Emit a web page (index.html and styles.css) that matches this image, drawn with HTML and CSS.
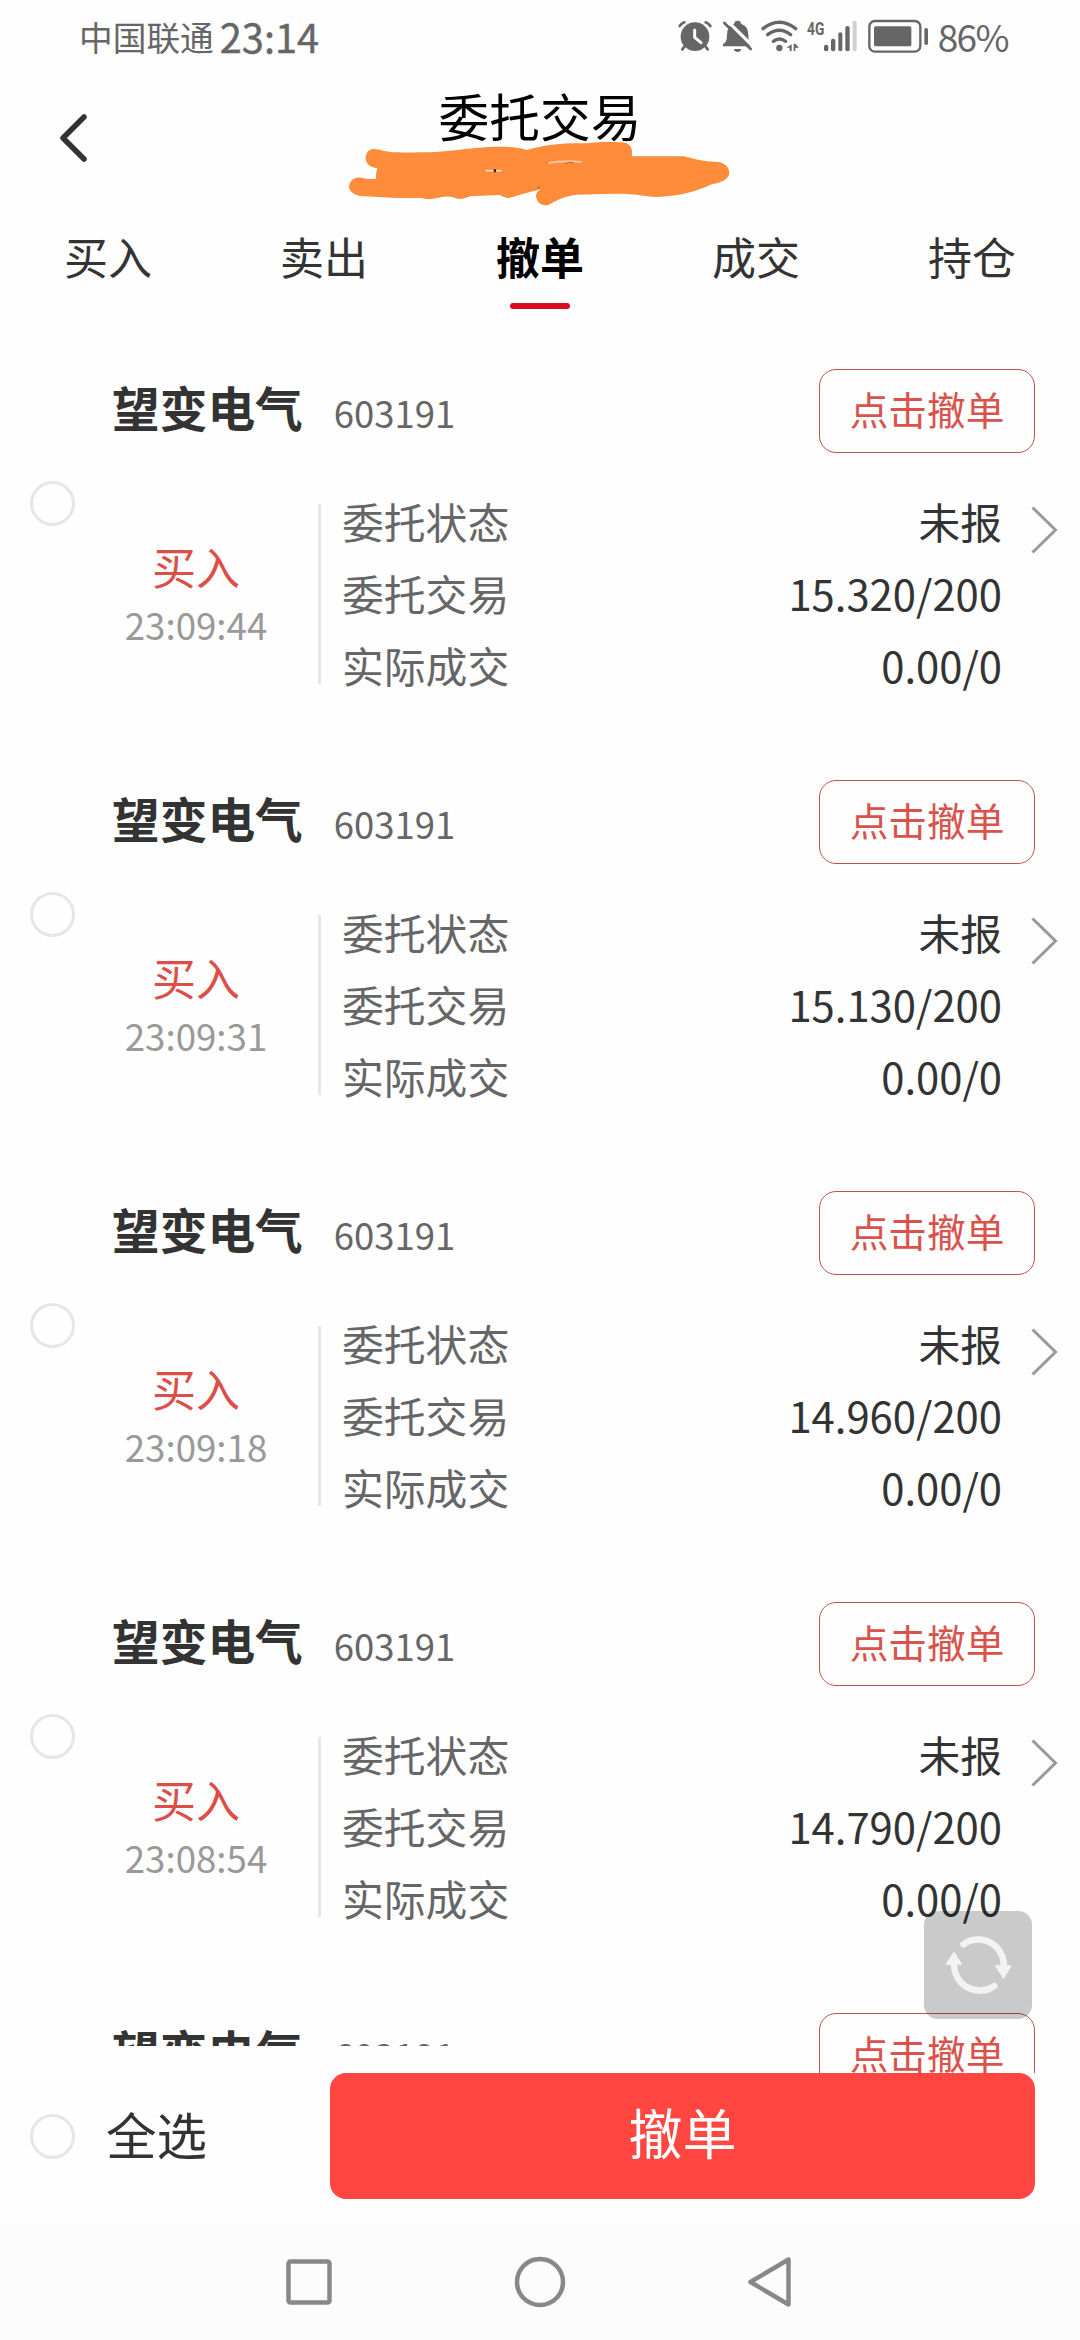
FILE: index.html
```html
<!DOCTYPE html>
<html lang="zh-CN">
<head>
<meta charset="utf-8">
<title>委托交易</title>
<link rel="stylesheet" href="styles.css">
</head>
<body>
<div class="screen">
  <div class="status">
    <span class="carrier">中国联通</span>
    <span class="clock">23:14</span>
    <div class="indicators">
      <svg class="ico-alarm" viewBox="57 54 105 108" width="35" height="36">
        <g fill="none" stroke="#666" stroke-linecap="round">
          <path d="M62 78Q67 70 76 67M154 78Q149 70 140 67" stroke-width="8"/>
          <path d="M76 140L70 148M140 140L146 148" stroke-width="8"/>
        </g>
        <circle cx="108" cy="110" r="43" fill="#666"/>
        <path d="M107 90V112L126 128" fill="none" stroke="#fefefe" stroke-width="9" stroke-linecap="round" stroke-linejoin="round"/>
      </svg>
      <svg class="ico-bell" viewBox="188 54 93 108" width="31" height="36">
        <path d="M191 139V132Q203 128 203 106Q203 76 224 72Q226 62 235 62Q244 62 246 72Q267 78 267 106Q267 128 277 134V139Z" fill="#666"/>
        <path d="M223 147H246Q244 156 235 156Q226 156 223 147Z" fill="#666"/>
        <path d="M203 62L284 142" stroke="#fefefe" stroke-width="10"/>
        <path d="M195 69L274 147" stroke="#666" stroke-width="8" stroke-linecap="round"/>
      </svg>
      <svg class="ico-wifi" viewBox="305 54 117 108" width="39" height="36">
        <g fill="none" stroke="#666" stroke-width="10" stroke-linecap="round">
          <path d="M311 86Q360 48 409 86"/>
          <path d="M325 104Q360 78 394 104"/>
          <path d="M342 124Q360 110 379 124"/>
        </g>
        <circle cx="360" cy="144" r="9.5" fill="#666"/>
        <path d="M381 143L397 133V153H391V143ZM403 131H408L419 143H408V153H403Z" fill="#666"/>
      </svg>
      <svg class="ico-signal" viewBox="443 54 150 108" width="50" height="36">
        <text x="443" y="104" class="net" textLength="52" lengthAdjust="spacingAndGlyphs">4G</text>
        <g fill="#666">
          <rect x="494" y="134" width="13" height="20" rx="6"/>
          <rect x="515" y="116" width="13" height="38" rx="6"/>
          <rect x="537" y="97" width="12" height="57" rx="6"/>
          <rect x="558" y="78" width="13" height="76" rx="6"/>
          <rect x="580" y="62" width="12" height="92" rx="6" fill="#d0d0d0"/>
        </g>
      </svg>
      <svg class="ico-battery" viewBox="627 54 183 108" width="61" height="36">
        <rect x="631" y="63" width="153" height="92" rx="17" fill="none" stroke="#666" stroke-width="7"/>
        <rect x="645" y="79" width="112" height="60" rx="5" fill="#666"/>
        <rect x="796" y="84" width="11" height="51" rx="5" fill="#666"/>
      </svg>
      <span class="percent">86%</span>
    </div>
  </div>

  <header class="titlebar">
    <svg class="back" viewBox="0 0 32 52" width="32" height="52"><path d="M26 5L5 26L26 47" fill="none" stroke="#333" stroke-width="5.5" stroke-linecap="round" stroke-linejoin="round"/></svg>
    <h1 class="title">委托交易</h1>
    <svg class="scribble" viewBox="45 180 1170 210" width="390" height="70">
      <path fill="#ff8c3a" d="M130 207C150 207 165 217 200 217C300 219 350 215 400 208C450 203 540 193 590 210C640 195 700 187 770 190C820 184 880 186 890 190C905 197 908 212 905 229L1060 229C1100 238 1130 247 1160 245C1185 247 1198 262 1198 280C1196 298 1175 308 1145 313C1100 335 1040 350 980 351C940 348 910 340 850 341L740 344C700 350 680 360 655 375C635 380 617 365 618 345Q622 333 632 328C600 335 570 345 545 352Q528 358 510 345L420 349C405 355 390 362 370 352C350 345 320 355 300 358Q285 358 275 354L200 354C160 352 130 350 90 348C65 342 57 330 57 318C60 300 75 290 95 293C110 298 125 297 138 296C138 285 138 275 142 265C120 262 106 250 107 233C108 218 117 208 130 207Z"/>
      <path d="M467 272H515" stroke="#ffe0c4" stroke-width="5"/>
      <path d="M491 272H498" stroke="#3a1c08" stroke-width="9"/>
      <path d="M655 249Q700 240 755 246" fill="none" stroke="#ffc59a" stroke-width="6"/>
      <path d="M706 251Q718 243 732 249M649 248H653M622 323H630" fill="none" stroke="#b4622a" stroke-width="3"/>
    </svg>
  </header>

  <nav class="tabs">
    <span class="tab">买入</span>
    <span class="tab">卖出</span>
    <span class="tab active">撤单</span>
    <span class="tab">成交</span>
    <span class="tab">持仓</span>
  </nav>

  <main class="list">
    <section class="order">
      <i class="check"></i>
      <div class="main">
        <div class="head"><div class="stock"><b class="name">望变电气</b><span class="code">603191</span></div><span class="cancel">点击撤单</span></div>
        <div class="body">
          <div class="side"><span class="buy">买入</span><span class="time">23:09:44</span></div>
          <div class="details">
            <div class="line"><span class="label">委托状态</span><span>未报</span></div>
            <div class="line"><span class="label">委托交易</span><span>15.320/200</span></div>
            <div class="line"><span class="label">实际成交</span><span>0.00/0</span></div>
          </div>
          <svg class="chevron" viewBox="0 0 30 50" width="30" height="50"><path d="M2.500 2.500L25.500 25L2.500 47.500" fill="none" stroke="#999" stroke-width="3"/></svg>
        </div>
      </div>
    </section>
    <section class="order">
      <i class="check"></i>
      <div class="main">
        <div class="head"><div class="stock"><b class="name">望变电气</b><span class="code">603191</span></div><span class="cancel">点击撤单</span></div>
        <div class="body">
          <div class="side"><span class="buy">买入</span><span class="time">23:09:31</span></div>
          <div class="details">
            <div class="line"><span class="label">委托状态</span><span>未报</span></div>
            <div class="line"><span class="label">委托交易</span><span>15.130/200</span></div>
            <div class="line"><span class="label">实际成交</span><span>0.00/0</span></div>
          </div>
          <svg class="chevron" viewBox="0 0 30 50" width="30" height="50"><path d="M2.500 2.500L25.500 25L2.500 47.500" fill="none" stroke="#999" stroke-width="3"/></svg>
        </div>
      </div>
    </section>
    <section class="order">
      <i class="check"></i>
      <div class="main">
        <div class="head"><div class="stock"><b class="name">望变电气</b><span class="code">603191</span></div><span class="cancel">点击撤单</span></div>
        <div class="body">
          <div class="side"><span class="buy">买入</span><span class="time">23:09:18</span></div>
          <div class="details">
            <div class="line"><span class="label">委托状态</span><span>未报</span></div>
            <div class="line"><span class="label">委托交易</span><span>14.960/200</span></div>
            <div class="line"><span class="label">实际成交</span><span>0.00/0</span></div>
          </div>
          <svg class="chevron" viewBox="0 0 30 50" width="30" height="50"><path d="M2.500 2.500L25.500 25L2.500 47.500" fill="none" stroke="#999" stroke-width="3"/></svg>
        </div>
      </div>
    </section>
    <section class="order">
      <i class="check"></i>
      <div class="main">
        <div class="head"><div class="stock"><b class="name">望变电气</b><span class="code">603191</span></div><span class="cancel">点击撤单</span></div>
        <div class="body">
          <div class="side"><span class="buy">买入</span><span class="time">23:08:54</span></div>
          <div class="details">
            <div class="line"><span class="label">委托状态</span><span>未报</span></div>
            <div class="line"><span class="label">委托交易</span><span>14.790/200</span></div>
            <div class="line"><span class="label">实际成交</span><span>0.00/0</span></div>
          </div>
          <svg class="chevron" viewBox="0 0 30 50" width="30" height="50"><path d="M2.500 2.500L25.500 25L2.500 47.500" fill="none" stroke="#999" stroke-width="3"/></svg>
        </div>
      </div>
    </section>
    <section class="order partial">
      <div class="main">
        <div class="head"><div class="stock"><b class="name">望变电气</b><span class="code">603191</span></div><span class="cancel">点击撤单</span></div>
      </div>
    </section>
    <div class="refresh">
      <svg viewBox="0 0 108 108" width="108" height="108">
        <g fill="none" stroke="#f3f3f3" stroke-width="6.500" stroke-linecap="round">
          <path d="M39.500 33.300A25.500 25.500 0 0 1 79.700 56"/>
          <path d="M70.300 75A25.500 25.500 0 0 1 30.300 52"/>
        </g>
        <path d="M70.500 54.300H87.900L79.500 68.300ZM21.200 53.700H38.500L30 40.300Z" fill="#f3f3f3"/>
      </svg>
    </div>
  </main>

  <footer class="footer">
    <i class="check"></i>
    <span class="all">全选</span>
    <span class="submit">撤单</span>
  </footer>

  <div class="sysnav">
    <svg viewBox="0 0 50 54" width="50" height="54"><rect x="4.500" y="6.500" width="41" height="41" rx="2" fill="none" stroke="#888" stroke-width="4.500"/></svg>
    <svg viewBox="0 0 54 54" width="54" height="54"><circle cx="27" cy="27" r="23" fill="none" stroke="#888" stroke-width="4.500"/></svg>
    <svg viewBox="0 0 48 54" width="48" height="54"><path d="M42.500 4.500V49.500L4.500 27Z" fill="none" stroke="#888" stroke-width="4.500" stroke-linejoin="round"/></svg>
  </div>
</div>
</body>
</html>
```

FILE: styles.css
```css
* { box-sizing: border-box; }
body {
  margin: 0;
  background: #fefefe;
  color: #333;
  font-family: "Noto Sans CJK SC", sans-serif;
}
.screen {
  width: 1080px;
  height: 2340px;
  display: flex;
  flex-direction: column;
  overflow: hidden;
  white-space: nowrap;
}

/* System status bar */
.status {
  height: 80px;
  padding: 0 72px 8px 79px;
  display: flex;
  align-items: center;
  color: #666;
}
.carrier { font-size: 33.7px; line-height: 73px; }
.clock { font-size: 39.8px; line-height: 72px; margin-left: 6px; -webkit-text-stroke: 0.4px #666; }
.indicators { margin-left: auto; display: flex; align-items: center; }
.ico-bell { margin-left: 9px; }
.ico-wifi { margin-left: 8px; }
.ico-signal { margin-left: 7px; }
.ico-battery { margin-left: 11px; }
.net { font: bold 54px "Roboto", sans-serif; fill: #666; }
.percent { font-size: 37px; line-height: 68px; margin-left: 9px; letter-spacing: -1.6px; }

/* Title */
.titlebar {
  position: relative;
  height: 140px;
  display: flex;
  justify-content: center;
}
.back { position: absolute; left: 58px; top: 32px; }
.title { margin: 0; font-size: 50.7px; line-height: 71px; font-weight: 400; color: #000; }
.scribble { position: absolute; left: 345px; top: 60px; }

/* Tabs */
.tabs { height: 113px; display: grid; grid-template-columns: repeat(5, 1fr); }
.tab {
  display: flex;
  flex-direction: column;
  align-items: center;
  font-size: 44px;
  line-height: 73px;
}
.active { color: #000; font-weight: 700; }
.active::after {
  content: "";
  width: 60px;
  height: 6px;
  margin-top: 10px;
  border-radius: 3px;
  background: #dc0b20;
}

/* Orders */
.list { position: relative; height: 1740px; overflow: hidden; }
.order { height: 411px; padding-left: 30px; display: flex; }
.check {
  width: 45px;
  height: 45px;
  border: 3px solid #e6e6e6;
  border-radius: 50%;
  flex: none;
}
.order .check { margin-top: 148px; }
.main { flex: 1; padding: 36px 0 0 37px; }
.head { height: 84px; padding-right: 45px; display: flex; justify-content: space-between; }
.stock { display: flex; align-items: center; }
.name { font-size: 47.7px; line-height: 76px; margin-bottom: 8px; }
.code { font-size: 36.5px; line-height: 84px; margin: 3px 0 0 31px; color: #666; }
.cancel {
  width: 216px;
  height: 84px;
  border: 1px solid #bd5450;
  border-radius: 17px;
  color: #d9534c;
  font-size: 38.7px;
  line-height: 77px;
  text-align: center;
}
.body { margin-top: 32px; display: flex; align-items: flex-start; }
.side {
  width: 168px;
  padding-top: 53px;
  display: flex;
  flex-direction: column;
  align-items: center;
  line-height: 57px;
}
.buy { font-size: 44px; color: #dc4f49; }
.time { font-size: 36.7px; line-height: 59px; color: #999; }
.details {
  width: 684px;
  margin-left: 38px;
  padding-left: 24px;
  background: linear-gradient(#e6e6e6, #e6e6e6) 0 19px / 3px 180px no-repeat;
}
.line {
  display: flex;
  justify-content: space-between;
  font-size: 41.8px;
  line-height: 72px;
}
.label { color: #666; }
.chevron { margin: 20px 0 0 28px; }

.partial { padding-left: 75px; }
.partial .stock { height: 33px; overflow: hidden; align-items: flex-start; }
.partial .name { margin: 0; }
.partial .code { margin-top: 1px; }

.refresh {
  position: absolute;
  left: 924px;
  top: 1578px;
  width: 108px;
  height: 108px;
  border-radius: 14px;
  background: rgba(0, 0, 0, 0.205);
}

/* Bottom action bar */
.footer {
  height: 151px;
  padding: 0 45px 25px 30px;
  display: flex;
  align-items: center;
}
.all { width: 224px; margin-left: 31px; font-size: 50.5px; line-height: 120px; padding-bottom: 7px; }
.submit {
  flex: 1;
  height: 126px;
  border-radius: 16px;
  background: #ff4641;
  color: #fff;
  font-size: 54px;
  line-height: 117px;
  text-align: center;
}

/* System navigation */
.sysnav {
  height: 116px;
  padding: 31px 0 0 284px;
  display: flex;
  background: #fcfcfc;
}
.sysnav svg + svg { margin-left: 179px; }
```
